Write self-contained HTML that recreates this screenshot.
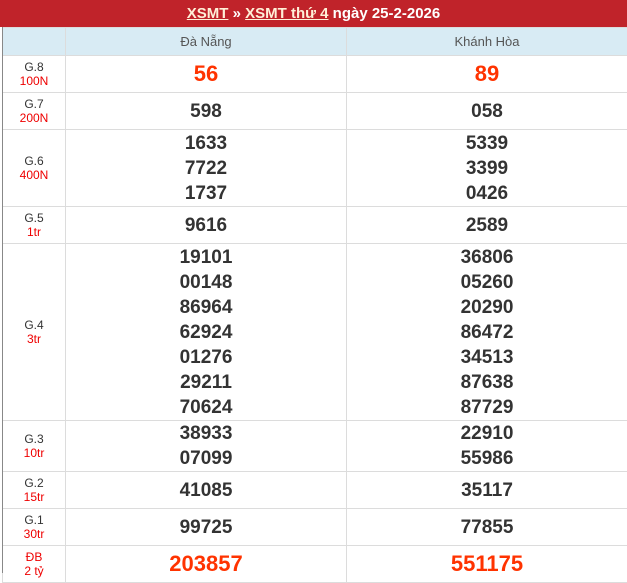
<!DOCTYPE html>
<html><head><meta charset="utf-8"><style>
body{margin:0;background:#fff;width:627px;height:573px;overflow:hidden;font-family:"Liberation Sans",Arial,sans-serif}
.hd{position:absolute;left:0;top:0;width:627px;height:27px;background:#c0232a;color:#fff;font-weight:bold;font-size:15px;text-align:center;line-height:28px}
.hd u{color:#fff0d8}
table{position:absolute;left:2px;top:27px;border-collapse:collapse;table-layout:fixed;width:625px}
td{border:1px solid #dcdcdc;text-align:center;padding:0;color:#333}
tr.h td{background:#d8ebf4;color:#555;font-size:13px;height:27px}
td.l{font-size:12px;line-height:14px;color:#333}
td.l span{color:#e00}
td.n{font-weight:bold;font-size:19px;line-height:25px}
td.r{font-weight:bold;font-size:22px;color:#ff3300}
.lb{position:absolute;left:2px;top:27px;width:1px;height:546px;background:#888}
</style></head><body>
<div class="hd"><u>XSMT</u> » <u>XSMT thứ 4</u> ngày 25-2-2026</div>
<table>
<col style="width:63px"><col style="width:281px"><col style="width:281px">
<tr class="h"><td></td><td>Đà Nẵng</td><td>Khánh Hòa</td></tr>
<tr style="height:37px"><td class="l">G.8<br><span>100N</span></td><td class="r">56</td><td class="r">89</td></tr>
<tr style="height:37px"><td class="l">G.7<br><span>200N</span></td><td class="n">598</td><td class="n">058</td></tr>
<tr style="height:77px"><td class="l">G.6<br><span>400N</span></td><td class="n">1633<br>7722<br>1737</td><td class="n">5339<br>3399<br>0426</td></tr>
<tr style="height:37px"><td class="l">G.5<br><span>1tr</span></td><td class="n">9616</td><td class="n">2589</td></tr>
<tr style="height:177px"><td class="l">G.4<br><span>3tr</span></td><td class="n">19101<br>00148<br>86964<br>62924<br>01276<br>29211<br>70624</td><td class="n">36806<br>05260<br>20290<br>86472<br>34513<br>87638<br>87729</td></tr>
<tr style="height:51px"><td class="l">G.3<br><span>10tr</span></td><td class="n">38933<br>07099</td><td class="n">22910<br>55986</td></tr>
<tr style="height:37px"><td class="l">G.2<br><span>15tr</span></td><td class="n">41085</td><td class="n">35117</td></tr>
<tr style="height:37px"><td class="l">G.1<br><span>30tr</span></td><td class="n">99725</td><td class="n">77855</td></tr>
<tr style="height:37px"><td class="l"><span>ĐB<br>2 tỷ</span></td><td class="r">203857</td><td class="r">551175</td></tr>
</table>
<div class="lb"></div>
</body></html>
